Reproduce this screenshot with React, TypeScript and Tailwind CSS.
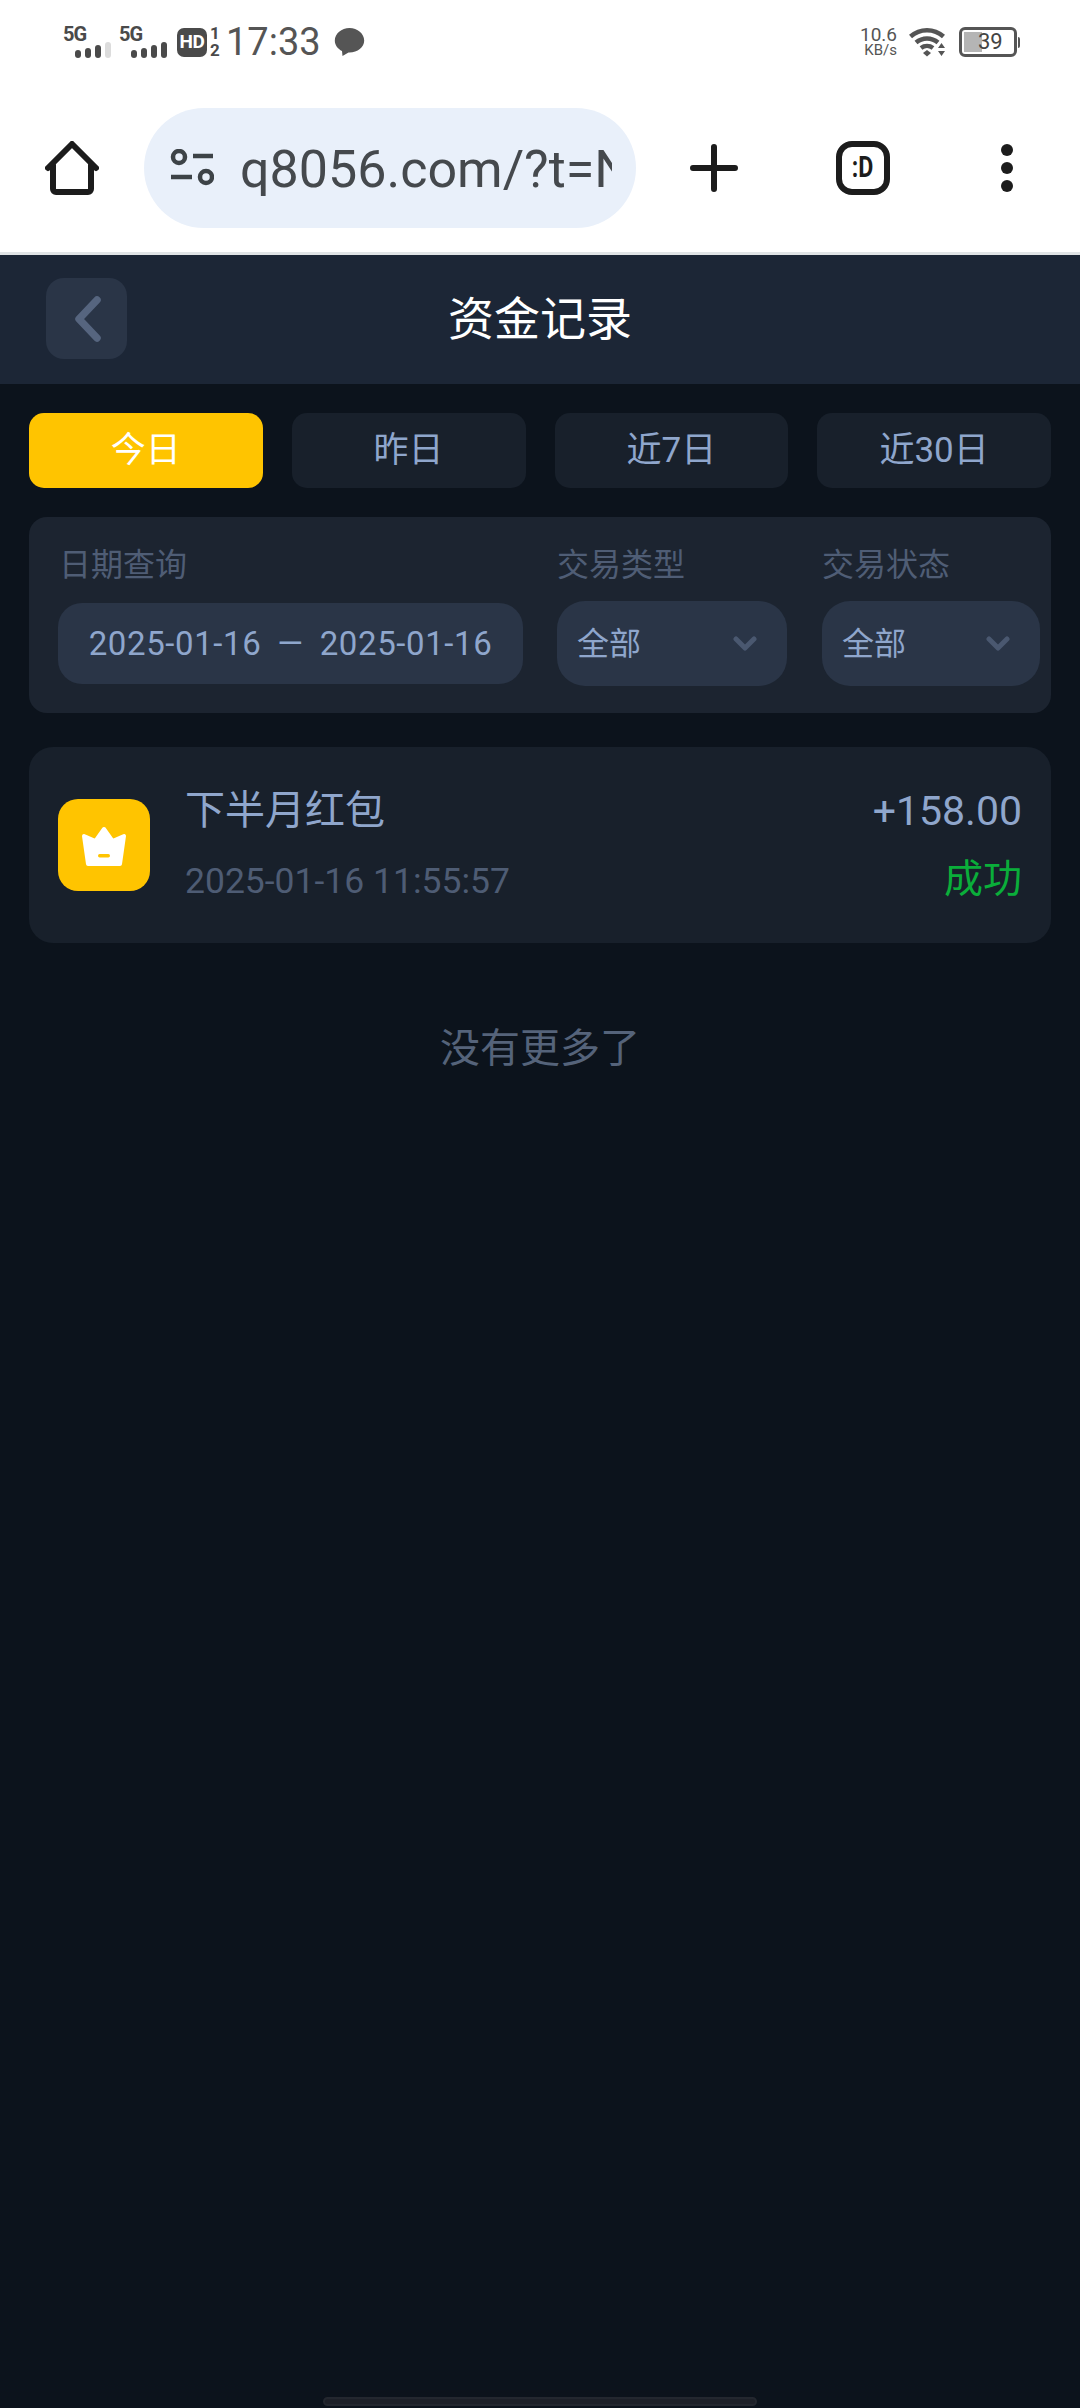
import type { FC } from 'react';

const tabs = ['今日', '昨日', '近7日', '近30日'];

const SignalBars: FC<{ dim?: boolean }> = ({ dim }) => (
  <div className="flex h-[16px] items-end gap-[4px]">
    <span className="h-[8px] w-[6px] rounded-[3px] bg-[#4a4a4a]" />
    <span className="h-[10px] w-[6px] rounded-[3px] bg-[#4a4a4a]" />
    <span className="h-[13px] w-[6px] rounded-[3px] bg-[#4a4a4a]" />
    <span className={`h-[16px] w-[6px] rounded-[3px] ${dim ? 'bg-[#dcdcdc]' : 'bg-[#4a4a4a]'}`} />
  </div>
);

const Signal: FC<{ dim?: boolean }> = ({ dim }) => (
  <div className="flex h-[31px] w-[48px] flex-col">
    <span className="h-[15px] text-[20px] leading-[15px] font-bold tracking-[-1px] text-[#4a4a4a]">5G</span>
    <div className="ml-[12px]">
      <SignalBars dim={dim} />
    </div>
  </div>
);

const StatusBar = () => (
  <div className="flex h-[84px] items-center justify-between pr-[60px] pl-[63px] font-['Roboto',sans-serif] text-[#555555]">
    <div className="flex items-center">
      <Signal dim />
      <div className="ml-[8px]">
        <Signal />
      </div>
      <div className="ml-[10px] flex h-[29px] w-[30px] items-center justify-center rounded-[7px] bg-[#4a4a4a] text-[19px] font-bold tracking-[-0.5px] text-white">
        HD
      </div>
      <div className="ml-[2px] flex h-[30px] w-[12px] flex-col items-center justify-between text-[17px] leading-[13px] font-bold text-[#4a4a4a]">
        <span>1</span>
        <span>2</span>
      </div>
      <span className="ml-[5px] text-[38px] leading-none">17:33</span>
      <svg className="ml-[13px]" width="31" height="30" viewBox="0 0 31 30">
        <path d="M15.5 1C7.5 1 .8 6.6.8 13.5c0 4.600 3 8.400 7.200 10.500L8.500 29l6-3.600h1c8 0 14.700-5 14.700-11.900C30.200 6.600 23.500 1 15.500 1z" fill="#555555" />
      </svg>
    </div>
    <div className="flex items-center">
      <div className="flex w-[37px] flex-col items-end leading-none">
        <span className="text-[19px] leading-[16px]">10.6</span>
        <span className="text-[15px] leading-[15px]">KB/s</span>
      </div>
      <svg className="ml-[12px]" width="39" height="30" viewBox="0 0 39 30">
        <g fill="none" stroke="#555555" strokeWidth="4.500">
          <path d="M1.500 9.500C11 1 25 1 34.500 9.500" />
          <path d="M7 15.500c6.500-5.500 15.500-5.500 22 0" />
          <path d="M12 21c3.500-2.600 8.500-2.600 12 0" />
        </g>
        <path d="M14 26l4-3 4 3-4 3.500z" fill="#555555" />
        <path d="M32.500 16l3.500 5h-7zM32.500 29l-3.500-5h7z" fill="#555555" />
      </svg>
      <div className="relative ml-[11px] flex h-[30px] w-[58px] items-center rounded-[6px] border-[3px] border-[#555555] p-[2px]">
        <div className="h-full w-[18px] bg-[#b5b5b5]" />
        <span className="absolute left-[16px] text-[22px] leading-none text-[#444444]">39</span>
      </div>
      <div className="ml-[1px] h-[11px] w-[2px] rounded-r-[2px] bg-[#555555]" />
    </div>
  </div>
);

const BrowserBar = () => (
  <div className="flex h-[144px] items-start pt-[24px]">
    <svg className="mt-[33px] ml-[45px]" width="54" height="54" viewBox="0 0 54 54">
      <path d="M3 27L27 3l24 24M8 24v24a3 3 0 0 0 3 3h32a3 3 0 0 0 3-3V24" fill="none" stroke="#1c1c1c" strokeWidth="6" strokeLinecap="round" strokeLinejoin="round" />
    </svg>
    <div className="ml-[45px] flex h-[120px] w-[492px] items-center rounded-[60px] bg-[#e9f0fa] pl-[26px]">
      <svg width="44" height="38" viewBox="0 0 44 38">
        <g fill="none" stroke="#3d4347" strokeWidth="4.500">
          <circle cx="9" cy="8" r="6" />
          <circle cx="36" cy="28" r="6" />
          <path d="M23 7h20M1 28h21" />
        </g>
      </svg>
      <div className="ml-[26px] w-[372px] overflow-hidden pt-[4px] font-['Roboto',sans-serif] text-[52px] leading-none whitespace-nowrap text-[#45494d]">
        q8056.com/?t=N
      </div>
    </div>
    <svg className="mt-[36px] ml-[54px]" width="48" height="48" viewBox="0 0 48 48">
      <path d="M24 3v42M3 24h42" stroke="#1c1c1c" strokeWidth="6" strokeLinecap="round" />
    </svg>
    <div className="mt-[33px] ml-[98px] flex h-[54px] w-[54px] items-center justify-center rounded-[16px] border-[6px] border-[#1c1c1c] font-['Roboto',sans-serif] text-[29px] font-bold text-[#1c1c1c]">
      <span className="inline-block scale-x-[0.8]">:D</span>
    </div>
    <div className="mt-[36px] ml-[111px] flex flex-col gap-[6px]">
      <span className="h-[12px] w-[12px] rounded-full bg-[#1c1c1c]" />
      <span className="h-[12px] w-[12px] rounded-full bg-[#1c1c1c]" />
      <span className="h-[12px] w-[12px] rounded-full bg-[#1c1c1c]" />
    </div>
  </div>
);

const Chevron = () => (
  <svg width="24" height="16" viewBox="0 0 24 16">
    <path d="M3 3l9 9 9-9" fill="none" stroke="#4a5870" strokeWidth="5" strokeLinecap="round" strokeLinejoin="round" />
  </svg>
);

const SelectBox: FC<{ width: string }> = ({ width }) => (
  <div className={`flex h-[85px] items-center justify-between rounded-[28px] bg-[#2a3547] pr-[30px] pl-[20px] text-[32px] text-[#8fa6cc] ${width}`}>
    <span>全部</span>
    <Chevron />
  </div>
);

const Crown = () => (
  <svg width="46" height="41" viewBox="0 0 46 41">
    <path d="M23 4l8.500 12L43 11l-4 28H7L3 11l11.500 5z" fill="#ffffff" stroke="#ffffff" strokeWidth="4" strokeLinejoin="round" />
    <rect x="17" y="29" width="12" height="3.500" rx="1.700" fill="#ffc400" />
  </svg>
);

export default function App() {
  return (
    <div className="flex h-[2408px] w-[1080px] flex-col overflow-hidden bg-[#0c131c] font-['Roboto','Noto_Sans_CJK_SC',sans-serif]">
      <div className="h-[252px] bg-white">
        <StatusBar />
        <BrowserBar />
      </div>
      <div className="h-[3px] bg-[#e0e4e6]" />

      <header className="relative flex h-[129px] items-center justify-center bg-[#1c2636] pb-[2px]">
        <button className="absolute top-[23px] left-[46px] flex h-[81px] w-[81px] items-center justify-center rounded-[18px] bg-[#2a3547]">
          <svg width="30" height="48" viewBox="0 0 30 48">
            <path d="M25 5L7 24l18 19" fill="none" stroke="#56657f" strokeWidth="7.500" strokeLinecap="round" strokeLinejoin="round" />
          </svg>
        </button>
        <h1 className="text-[46px] leading-none font-normal text-white">资金记录</h1>
      </header>

      <main className="flex flex-1 flex-col px-[29px] pt-[29px]">
        <div className="grid grid-cols-4 gap-[29px]">
          {tabs.map((t, i) => (
            <div
              key={t}
              className={`flex h-[75px] items-center justify-center rounded-[15px] pt-[2px] text-[35px] ${
                i === 0 ? 'bg-[#ffc400] text-white' : 'bg-[#18202b] text-[#8fa6cc]'
              }`}
            >
              {t}
            </div>
          ))}
        </div>

        <section className="mt-[29px] flex h-[196px] rounded-[18px] bg-[#1c2430] pt-[30px] pl-[29px]">
          <div className="w-[499px]">
            <div className="pl-[1px] text-[32px] leading-[36px] text-[#4f5d75]">日期查询</div>
            <div className="mt-[20px] flex h-[81px] w-[465px] items-center justify-center gap-[16px] rounded-[24px] bg-[#2a3547] text-[33px] tracking-[0.6px] text-[#8fa6cc]">
              <span>2025-01-16</span>
              <span>—</span>
              <span>2025-01-16</span>
            </div>
          </div>
          <div className="w-[265px]">
            <div className="text-[32px] leading-[36px] text-[#4f5d75]">交易类型</div>
            <div className="mt-[18px]">
              <SelectBox width="w-[230px]" />
            </div>
          </div>
          <div>
            <div className="text-[32px] leading-[36px] text-[#4f5d75]">交易状态</div>
            <div className="mt-[18px]">
              <SelectBox width="w-[218px]" />
            </div>
          </div>
        </section>

        <section className="mt-[34px] flex h-[196px] items-center rounded-[24px] bg-[#18202b] pr-[29px] pl-[29px]">
          <div className="flex h-[92px] w-[92px] items-center justify-center rounded-[20px] bg-[#ffc400]">
            <Crown />
          </div>
          <div className="ml-[35px] flex flex-col pb-[3px]">
            <div className="text-[40px] leading-[48px] text-[#8fa6cc]">下半月红包</div>
            <div className="mt-[26px] text-[35.500px] leading-[40px] text-[#4e5c74]">2025-01-16 11:55:57</div>
          </div>
          <div className="ml-auto flex flex-col items-end">
            <div className="text-[41px] leading-[48px] text-[#8fa6cc]">+158.00</div>
            <div className="mt-[20px] text-[39px] leading-[48px] text-[#0aae3a]">成功</div>
          </div>
        </section>

        <div className="mt-[82px] text-center text-[40px] leading-[48px] text-[#55637a]">没有更多了</div>
      </main>

      <div className="flex justify-center pb-[2px]">
        <div className="h-[9px] w-[434px] rounded-full border-[2px] border-[#23272f] bg-[#1d2028]" />
      </div>
    </div>
  );
}
